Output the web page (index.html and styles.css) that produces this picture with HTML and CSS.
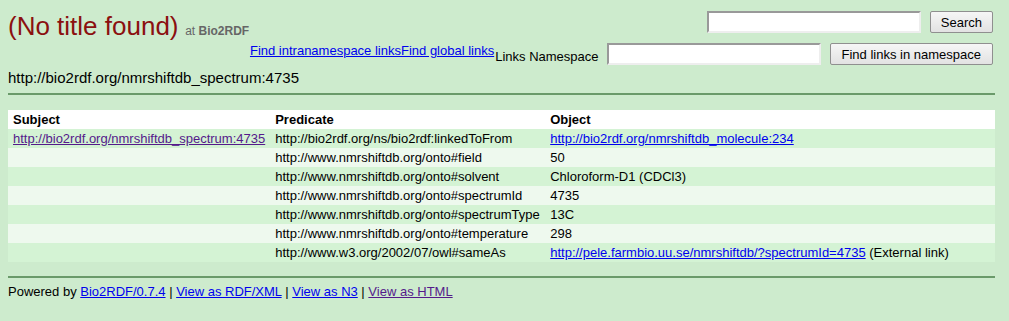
FILE: index.html
```html
<!DOCTYPE html>
<html>
<head>
<meta charset="utf-8">
<title>Bio2RDF</title>
<link rel="stylesheet" href="styles.css">
</head>
<body>
<div class="header">
  <div class="title">
    <span class="main-title">(No title found)</span>
    <span class="at">at <b>Bio2RDF</b></span>
  </div>
  <div class="forms">
    <form class="row">
      <input class="text search-box" type="text">
      <button class="btn" type="button">Search</button>
    </form>
    <form class="row row2">
      <a href="#" class="link">Find intranamespace links</a><a href="#" class="link">Find global links</a>
      <span class="label">Links Namespace</span>
      <input class="text" type="text">
      <button class="btn" type="button">Find links in namespace</button>
    </form>
  </div>
</div>
<div class="uri">http://bio2rdf.org/nmrshiftdb_spectrum:4735</div>
<hr class="rule">
<table class="triples">
  <thead>
    <tr><th class="c1">Subject</th><th class="c2">Predicate</th><th>Object</th></tr>
  </thead>
  <tbody>
    <tr class="odd"><td><a href="#" class="visited">http://bio2rdf.org/nmrshiftdb_spectrum:4735</a></td><td>http://bio2rdf.org/ns/bio2rdf:linkedToFrom</td><td><a href="#">http://bio2rdf.org/nmrshiftdb_molecule:234</a></td></tr>
    <tr class="even"><td></td><td>http://www.nmrshiftdb.org/onto#field</td><td>50</td></tr>
    <tr class="odd"><td></td><td>http://www.nmrshiftdb.org/onto#solvent</td><td>Chloroform-D1 (CDCl3)</td></tr>
    <tr class="even"><td></td><td>http://www.nmrshiftdb.org/onto#spectrumId</td><td>4735</td></tr>
    <tr class="odd"><td></td><td>http://www.nmrshiftdb.org/onto#spectrumType</td><td>13C</td></tr>
    <tr class="even"><td></td><td>http://www.nmrshiftdb.org/onto#temperature</td><td>298</td></tr>
    <tr class="odd"><td></td><td>http://www.w3.org/2002/07/owl#sameAs</td><td><a href="#">http://pele.farmbio.uu.se/nmrshiftdb/?spectrumId=4735</a> (External link)</td></tr>
  </tbody>
</table>
<hr class="rule footer-rule">
<div class="footer">Powered by <a href="#">Bio2RDF/0.7.4</a> | <a href="#">View as RDF/XML</a> | <a href="#">View as N3</a> | <a href="#" class="visited">View as HTML</a></div>
</body>
</html>
```
FILE: styles.css
```css
html { background: #cdebcd; }
body {
  margin: 8px 14px 8px 8px;
  font-family: "Liberation Sans", Arial, sans-serif;
  font-size: 13px;
  color: #000;
  background: #cdebcd;
}
a { color: #0000ee; text-decoration: underline; }
a.visited { color: #551a8b; }

.header {
  display: flex;
  justify-content: space-between;
  align-items: flex-start;
  height: 59px;
  white-space: nowrap;
}
.title { padding-top: 3px; flex-shrink: 0; }
.main-title {
  font-size: 26px;
  color: #8b1010;
}
.at {
  font-size: 12px;
  color: #666;
  margin-left: 3px;
}
.at b { font-weight: bold; }

.forms {
  display: flex;
  flex-direction: column;
  align-items: flex-end;
  padding-top: 3px;
  flex-shrink: 0;
}
.row {
  display: flex;
  align-items: center;
  margin: 0;
  flex-shrink: 0;
}
.row > * { flex-shrink: 0; }
.row2 { margin-top: 10px; }
.link { font-size: 13px; position: relative; top: -4px; }
.label { margin-left: 1px; margin-right: 8px; position: relative; top: 2px; }
.text {
  box-sizing: border-box;
  width: 214px;
  height: 22px;
  border: 2px solid;
  border-color: #999 #eee #eee #999;
  background: #fff;
  padding: 1px 3px;
  margin: 0;
  font-family: inherit;
}
.btn {
  box-sizing: border-box;
  height: 22px;
  margin: 0 2px 0 9px;
  padding: 0 10px;
  font-family: "Liberation Sans", Arial, sans-serif;
  font-size: 13px;
  color: #000;
  background: linear-gradient(#f6f6f6, #e2e2e2);
  border: 1px solid #8f8f8f;
  border-radius: 2px;
}
.row2 .btn { padding: 0 11px; }

.uri {
  font-size: 15px;
  margin-top: 1px;
  line-height: 19px;
}
.rule {
  border: 0;
  height: 2px;
  background: #6a9a6a;
  margin: 6px 0 15px 0;
}
.triples {
  width: 100%;
  border-collapse: collapse;
  font-size: 13px;
}
.triples th, .triples td {
  text-align: left;
  padding: 2px 5px;
  line-height: 15px;
  white-space: nowrap;
}
.triples th { font-weight: bold; background: #fff; }
.triples .c1 { width: 250px; }
.triples .c2 { width: 265px; }
.triples tr.odd td { background: #d4f3d4; }
.triples tr.even td { background: #eef9ee; }

.footer-rule { margin: 14px 0 6px 0; }
.footer { line-height: 15px; }
```
